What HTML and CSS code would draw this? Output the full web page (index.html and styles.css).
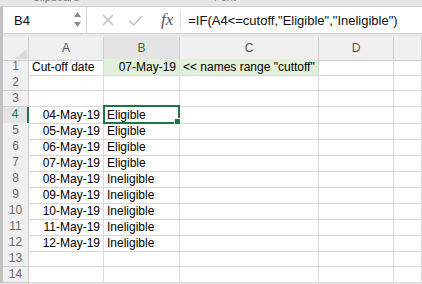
FILE: index.html
```html
<!DOCTYPE html>
<html lang="en">
<head>
  <meta charset="UTF-8">
  <meta name="viewport" content="width=device-width, initial-scale=1">
  <title>Eligibility</title>
  <link rel="stylesheet" href="styles.css">
</head>
<body>

<div class="ribbon">
  <span class="group-label clip">Clipboard</span>
  <span class="group-label">Font</span>
</div>

<div class="main">
  <div class="formula-bar">
    <div class="name-box">
      <span>B4</span>
      <span class="spin">
        <svg width="7" height="16" viewBox="0 0 7 16"><path d="M3.5 0 L7 5 L0 5 Z M0 10 L7 10 L3.5 15 Z" fill="#8a8a8a"/></svg>
      </span>
    </div>
    <div class="fx-buttons">
      <svg class="btn-x" width="12" height="12" viewBox="0 0 12 12"><path d="M1 1 L11 11 M11 1 L1 11" stroke="#c4c4c4" stroke-width="1.6" fill="none"/></svg>
      <svg class="btn-ok" width="15" height="11" viewBox="0 0 15 11"><path d="M1 5.5 L5.5 10 L14 1" stroke="#c4c4c4" stroke-width="1.6" fill="none"/></svg>
      <span class="fx">fx</span>
    </div>
    <div class="formula">=IF(A4&lt;=cutoff,"Eligible","Ineligible")</div>
  </div>

  <div class="sheet">
    <div class="row head">
      <div class="corner"><span class="tri"></span></div>
      <div class="col-head">A</div>
      <div class="col-head active">B</div>
      <div class="col-head">C</div>
      <div class="col-head">D</div>
      <div class="col-head last"></div>
    </div>
    <div class="row">
      <div class="row-head">1</div>
      <div class="cell">Cut-off date</div>
      <div class="cell num named">07-May-19</div>
      <div class="cell named">&lt;&lt; names range "cuttoff"</div>
      <div class="cell"></div>
      <div class="cell"></div>
    </div>
    <div class="row">
      <div class="row-head">2</div>
      <div class="cell"></div><div class="cell"></div><div class="cell"></div><div class="cell"></div><div class="cell"></div>
    </div>
    <div class="row">
      <div class="row-head">3</div>
      <div class="cell"></div><div class="cell"></div><div class="cell"></div><div class="cell"></div><div class="cell"></div>
    </div>
    <div class="row">
      <div class="row-head active">4</div>
      <div class="cell num">04-May-19</div>
      <div class="cell selected">Eligible<span class="sel-box"><span class="handle"></span></span></div>
      <div class="cell"></div><div class="cell"></div><div class="cell"></div>
    </div>
    <div class="row">
      <div class="row-head">5</div>
      <div class="cell num">05-May-19</div>
      <div class="cell">Eligible</div>
      <div class="cell"></div><div class="cell"></div><div class="cell"></div>
    </div>
    <div class="row">
      <div class="row-head">6</div>
      <div class="cell num">06-May-19</div>
      <div class="cell">Eligible</div>
      <div class="cell"></div><div class="cell"></div><div class="cell"></div>
    </div>
    <div class="row">
      <div class="row-head">7</div>
      <div class="cell num">07-May-19</div>
      <div class="cell">Eligible</div>
      <div class="cell"></div><div class="cell"></div><div class="cell"></div>
    </div>
    <div class="row">
      <div class="row-head">8</div>
      <div class="cell num">08-May-19</div>
      <div class="cell">Ineligible</div>
      <div class="cell"></div><div class="cell"></div><div class="cell"></div>
    </div>
    <div class="row">
      <div class="row-head">9</div>
      <div class="cell num">09-May-19</div>
      <div class="cell">Ineligible</div>
      <div class="cell"></div><div class="cell"></div><div class="cell"></div>
    </div>
    <div class="row">
      <div class="row-head">10</div>
      <div class="cell num">10-May-19</div>
      <div class="cell">Ineligible</div>
      <div class="cell"></div><div class="cell"></div><div class="cell"></div>
    </div>
    <div class="row">
      <div class="row-head">11</div>
      <div class="cell num">11-May-19</div>
      <div class="cell">Ineligible</div>
      <div class="cell"></div><div class="cell"></div><div class="cell"></div>
    </div>
    <div class="row">
      <div class="row-head">12</div>
      <div class="cell num">12-May-19</div>
      <div class="cell">Ineligible</div>
      <div class="cell"></div><div class="cell"></div><div class="cell"></div>
    </div>
    <div class="row">
      <div class="row-head">13</div>
      <div class="cell"></div><div class="cell"></div><div class="cell"></div><div class="cell"></div><div class="cell"></div>
    </div>
    <div class="row">
      <div class="row-head">14</div>
      <div class="cell"></div><div class="cell"></div><div class="cell"></div><div class="cell"></div><div class="cell"></div>
    </div>
  </div>
</div>

</body>
</html>
```

FILE: styles.css
```css
body {
  margin: 0;
  padding: 0;
  width: 422px;
  height: 284px;
  overflow: hidden;
  background-color: #e8e8e8;
  font-family: "Liberation Sans", Arial, sans-serif;
  color: #111;
}
.ribbon {
  height: 6px;
  overflow: hidden;
  background: #e6e6e6;
  border-bottom: 1px solid #cfcfcf;
  display: flex;
}
.group-label {
  font-size: 11px;
  line-height: 12px;
  margin-top: -9px;
  color: #7a7a7a;
}
.group-label.clip {
  margin-left: 32px;
  width: 182px;
}
.main {
  border-left: 3px solid #c2c2c2;
}
.formula-bar {
  display: flex;
  align-items: center;
  height: 26px;
  background: white;
  border-bottom: 1px solid #d3d3d3;
  margin-bottom: 3px;
}
.name-box {
  display: flex;
  align-items: center;
  justify-content: space-between;
  box-sizing: border-box;
  width: 84px;
  height: 100%;
  padding: 0 5px 0 11px;
  border-right: 1px solid #d6d6d6;
  font-size: 13px;
}
.spin {
  display: flex;
}
.fx-buttons {
  display: flex;
  align-items: center;
  height: 17px;
  padding: 0 0 0 15px;
  border-right: 1px solid #dcdcdc;
}
.btn-x {
  margin-right: 14px;
}
.btn-ok {
  margin-right: 18px;
}
.fx {
  font-family: "Liberation Serif", "Times New Roman", serif;
  font-style: italic;
  font-size: 17px;
  color: #5a5a5a;
  margin-right: 7px;
}
.formula {
  padding-left: 7px;
  font-size: 13px;
  color: #111;
  white-space: nowrap;
}
.sheet {
  background: white;
}
.row {
  display: grid;
  grid-template-columns: 26px 75px 76px 139px 75px 28px;
  height: 16px;
}
.row.head {
  height: 22px;
}
.row > div {
  box-sizing: border-box;
  border-right: 1px solid #d8d8d8;
  border-bottom: 1px solid #d8d8d8;
  white-space: nowrap;
}
.corner {
  position: relative;
  background: #f0f0f0;
  border-color: #cdcdcd !important;
}
.tri {
  position: absolute;
  right: 1px;
  bottom: 1px;
  width: 0;
  height: 0;
  border-left: 12px solid transparent;
  border-bottom: 10px solid #d9d9d9;
}
.col-head {
  background: #f0f0f0;
  border-color: #cdcdcd !important;
  font-size: 12px;
  line-height: 22px;
  text-align: center;
  color: #555;
}
.col-head.active {
  background: #e4e4e4;
  color: #217346;
  border-bottom: 2px solid #217346 !important;
}
.row-head {
  background: #f0f0f0;
  border-color: #cdcdcd !important;
  font-size: 12px;
  line-height: 15px;
  text-align: center;
  color: #6a6a6a;
}
.row-head.active {
  background: #e4e4e4;
  color: #217346;
  border-right: 2px solid #217346 !important;
}
.cell {
  font-size: 12px;
  line-height: 16px;
  padding: 0 3px 0 3px;
  color: #000;
}
.cell.num {
  text-align: right;
}
.cell.named {
  background: #e2efda;
}
.cell.selected {
  position: relative;
}
.sel-box {
  position: absolute;
  top: -2px;
  left: -1px;
  right: -1px;
  bottom: -1px;
  border: 2px solid #217346;
}
.handle {
  position: absolute;
  right: -3px;
  bottom: -3px;
  width: 5px;
  height: 5px;
  background: #217346;
  border: 1px solid white;
}
```
